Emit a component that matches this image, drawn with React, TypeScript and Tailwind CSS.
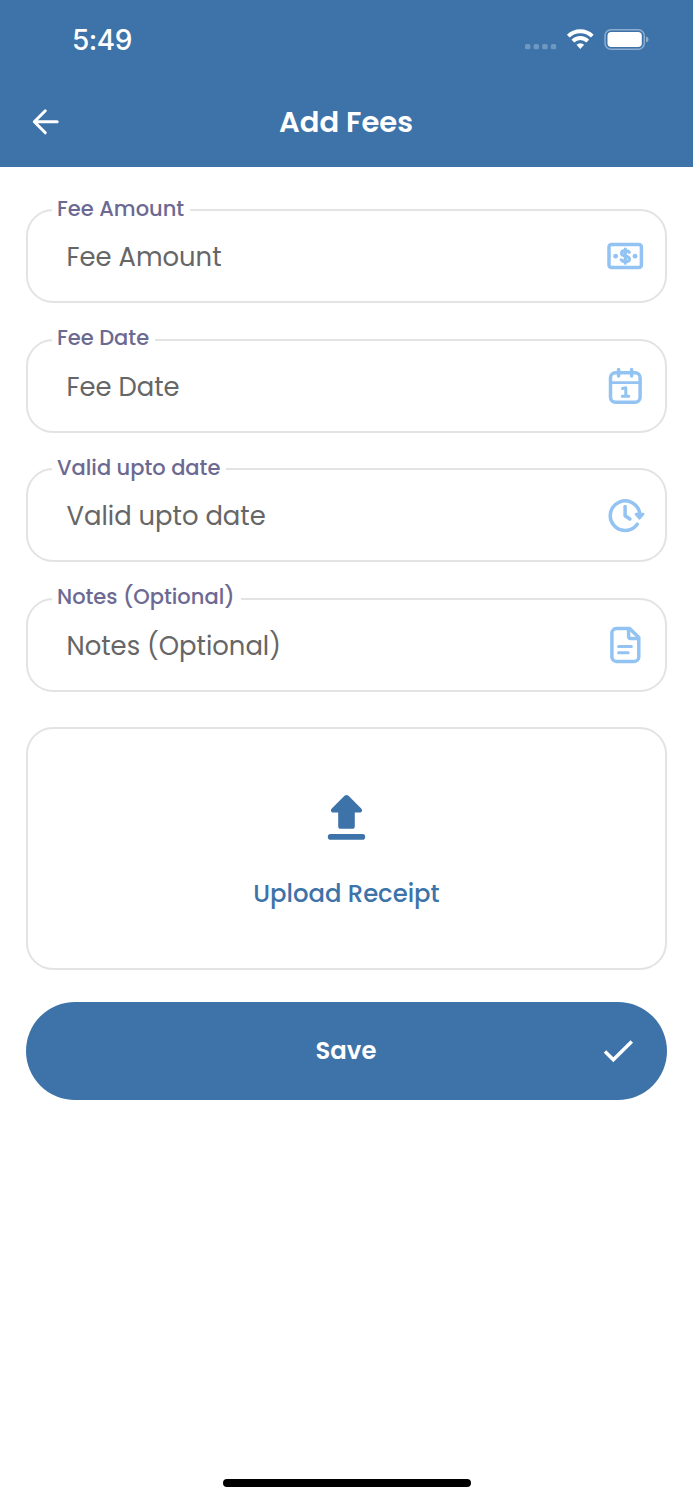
import type { ReactNode } from "react";

const lineIcon = {
  width: 40,
  height: 40,
  viewBox: "0 0 40 40",
  fill: "none",
  stroke: "#93c3f2",
  strokeWidth: 3.5,
  strokeLinecap: "round" as const,
  strokeLinejoin: "round" as const,
};

function MoneyIcon() {
  return (
    <svg {...lineIcon}>
      <rect x="4" y="8.6" width="32.4" height="23" rx="2.5" />
      <path d="M24.200 16.200c-.8-1.100-2-1.600-3.800-1.600-2.300 0-3.900 1-3.900 2.700 0 3.800 7.900 1.800 7.900 5.600 0 1.800-1.700 2.800-4 2.800-1.900 0-3.300-.6-4.100-1.800M20.300 13v14.200" strokeWidth="3.200" />
      <circle cx="10.600" cy="20.200" r="2.400" fill="#93c3f2" stroke="none" />
      <circle cx="30" cy="20.200" r="2.400" fill="#93c3f2" stroke="none" />
    </svg>
  );
}

function CalendarIcon() {
  return (
    <svg {...lineIcon}>
      <rect x="5.500" y="6.700" width="29.600" height="29.600" rx="5" />
      <path d="M5.500 16.600h29.600" strokeWidth="2.800" />
      <path d="M13.600 3.500v6.400M26.600 3.500v6.400" />
      <path d="M17.500 22.400l3.300-.6v8.300M17.200 30.200h6.600" strokeWidth="3" />
    </svg>
  );
}

function ClockIcon() {
  return (
    <svg {...lineIcon}>
      <path d="M32.200 29.200A14.800 14.800 0 1 1 34.800 19" />
      <path d="M20.100 11.600v9.200l4.800 3.200" />
      <path d="M31 19.200h7l-3.500 4z" fill="#93c3f2" strokeWidth="2.800" />
    </svg>
  );
}

function NoteIcon() {
  return (
    <svg {...lineIcon}>
      <path d="M11.400 3.600h13.200l9.200 9v19.300a4.500 4.500 0 0 1-4.500 4.500H11.400a4.500 4.500 0 0 1-4.500-4.500V8.100a4.500 4.500 0 0 1 4.500-4.500z" />
      <path d="M23.600 4.300v7.500a1.800 1.800 0 0 0 1.800 1.800h7.500" />
      <path d="M13.600 21.400h12.800M13.600 27.800h9.600" strokeWidth="3" />
    </svg>
  );
}

function Field({ label, icon }: { label: string; icon: ReactNode }) {
  return (
    <div className="relative flex h-[94px] items-center justify-between rounded-[27px] border-2 border-[#e3e3e3] pr-[20px] pl-[38.500px]">
      <span className="absolute -top-[18.500px] left-6 h-8 bg-white pr-1.5 pl-[5px] text-[21px] leading-8 font-medium whitespace-nowrap text-[#6c6992]">
        {label}
      </span>
      <span className="pt-[3px] text-[25.850px] whitespace-nowrap text-[#666]">{label}</span>
      {icon}
    </div>
  );
}

export default function App() {
  return (
    <div className="flex h-[1500px] w-[693px] flex-col bg-white font-['Poppins','Inter',sans-serif]">
      <header className="flex h-[167px] shrink-0 flex-col bg-[#3d73a9] text-white">
        <div className="flex h-20 items-center justify-between pr-[44px] pl-[72px]">
          <span className="font-['Inter',sans-serif] text-[28px] font-medium tracking-[-0.500px]">5:49</span>
          <svg width="124" height="26" viewBox="525 27 124 26" fill="none">
            <g fill="#6f98c1">
              <rect x="525" y="44" width="5.400" height="5.200" rx="1.500" />
              <rect x="533.600" y="44" width="5.400" height="5.200" rx="1.500" />
              <rect x="542.200" y="44" width="5.400" height="5.200" rx="1.500" />
              <rect x="550.800" y="44" width="5.400" height="5.200" rx="1.500" />
            </g>
            <g stroke="#fff" strokeWidth="3.900">
              <path d="M568.300 36.200a17 17 0 0 1 24 0" />
              <path d="M572.900 41.100a10.400 10.400 0 0 1 14.800 0" />
            </g>
            <path d="M576.500 44.800a5.500 5.500 0 0 1 7.600 0l-3.800 4.200z" fill="#fff" />
            <rect x="605" y="29.700" width="39.300" height="19.600" rx="6" stroke="#8dadce" strokeWidth="1.500" />
            <rect x="607.500" y="32" width="34.300" height="15" rx="3.800" fill="#fff" />
            <path d="M646 36.600c3.400.8 3.400 4.900 0 5.700z" fill="#8dadce" />
          </svg>
        </div>
        <div className="grid h-[84px] grid-cols-[1fr_auto_1fr] items-center pr-[33px] pl-8">
          <svg width="28" height="28" viewBox="0 0 28 28" fill="none" stroke="#fff" strokeWidth="3" strokeLinecap="round" strokeLinejoin="round">
            <path d="M25.200 13.800H2.500M13.300 2.800l-11 11 11 11" />
          </svg>
          <h1 className="pt-0.5 text-[29px] font-semibold">Add Fees</h1>
        </div>
      </header>
      <main className="flex flex-col px-[26px] pt-[42px]">
        <div className="flex flex-col gap-[35.600px]">
          <Field label="Fee Amount" icon={<MoneyIcon />} />
          <Field label="Fee Date" icon={<CalendarIcon />} />
          <Field label="Valid upto date" icon={<ClockIcon />} />
          <Field label="Notes (Optional)" icon={<NoteIcon />} />
        </div>
        <div className="mt-[35.600px] flex h-[243px] flex-col items-center rounded-[27px] border-2 border-[#e3e3e3] pt-[64px]">
          <svg width="39" height="48" viewBox="0.500 0.200 39 48" fill="#3d73a9">
            <path d="M18 3a3 3 0 0 1 4 0l12.700 12.600c1.800 1.800.6 4-1.500 4h-4.900v13.800a2.600 2.600 0 0 1-2.600 2.600H14.300a2.600 2.600 0 0 1-2.600-2.600V19.600H6.800c-2.100 0-3.300-2.200-1.500-4z" />
            <rect x="1.300" y="41.300" width="37.400" height="5.600" rx="2.800" />
          </svg>
          <span className="mt-[35px] text-[24.300px] leading-9 font-medium text-[#3d73a9]">Upload Receipt</span>
        </div>
        <button className="mt-8 grid h-[98px] grid-cols-[1fr_auto_1fr] items-center rounded-full bg-[#3d73a9] pr-[33px] text-white">
          <span className="w-8" />
          <span className="pl-8 text-[24.300px] font-semibold">Save</span>
          <svg className="justify-self-end" width="32" height="24" viewBox="0 0 32 24" fill="none" stroke="#fff" strokeWidth="3.500">
            <path d="M3 12.500l8.300 8.300L29.800 2.500" />
          </svg>
        </button>
      </main>
      <div className="mt-auto mb-[13px] h-2 w-[248px] self-center rounded-full bg-black" />
    </div>
  );
}
